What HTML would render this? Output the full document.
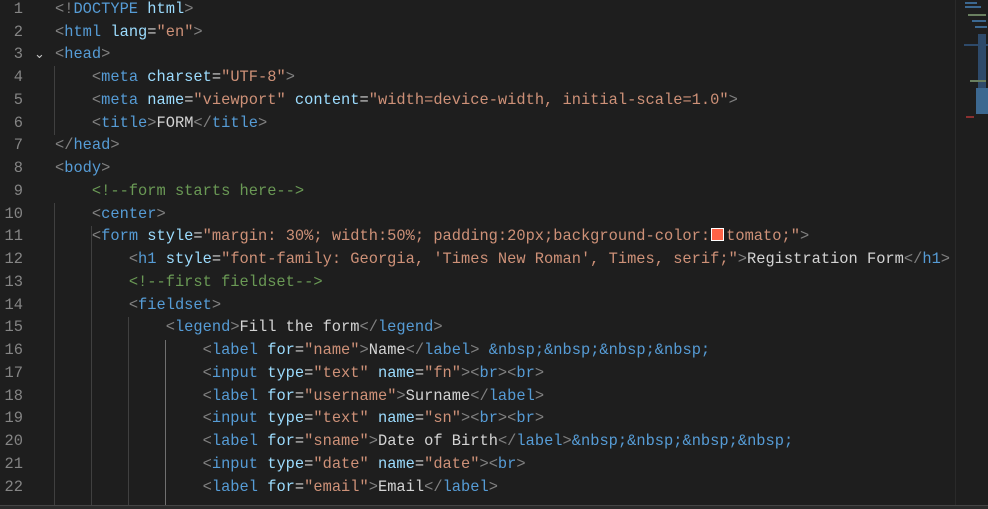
<!DOCTYPE html>
<html><head><meta charset="utf-8"><style>
body{margin:0;width:988px;height:508px;background:#1e1e1e;overflow:hidden;position:relative;font-family:"Liberation Mono",monospace;font-size:15.38px;}
.l{position:absolute;left:55px;height:23px;line-height:23px;white-space:pre;color:#d4d4d4}
.n{position:absolute;left:0;width:23px;text-align:right;height:23px;line-height:23px;color:#858585}
.b{color:#808080}.t{color:#569cd6}.a{color:#9cdcfe}.s{color:#ce9178}.c{color:#6a9955}
.g{position:absolute;width:1px;background:#404040}
.mm{position:absolute;height:2px}
</style></head><body>
<div class="g" style="left:54px;top:203px;height:302px"></div>
<div class="g" style="left:91px;top:226px;height:279px"></div>
<div class="g" style="left:128px;top:317px;height:188px"></div>
<div class="g" style="left:165px;top:340px;height:165px;background:#707070"></div>
<div class="g" style="left:54px;top:66px;height:69px"></div>
<div style="position:absolute;left:955px;top:0;width:33px;height:505px;background:#1e1e1e;border-left:1px solid #2a2a2a"></div>
<div class="mm" style="left:965px;top:2px;width:12px;background:#3c6890"></div>
<div class="mm" style="left:965px;top:6px;width:16px;background:#3c6890"></div>
<div class="mm" style="left:968px;top:14px;width:18px;background:#6a8060"></div>
<div class="mm" style="left:972px;top:20px;width:14px;background:#3c6890"></div>
<div class="mm" style="left:975px;top:26px;width:12px;background:#3c6890"></div>
<div class="mm" style="left:964px;top:44px;width:24px;background:#2e4a6a"></div>
<div class="mm" style="left:978px;top:34px;width:8px;height:60px;background:#2e4a6a"></div>
<div class="mm" style="left:970px;top:80px;width:16px;background:#6a8060"></div>
<div class="mm" style="left:976px;top:88px;width:12px;height:26px;background:#3c6890"></div>
<div class="mm" style="left:966px;top:116px;width:8px;background:#8a3030"></div>
<div style="position:absolute;left:0;top:505px;width:988px;height:3px;background:#2b2b2b;border-top:1px solid #454545"></div>

<div class="n" style="top:-2px">1</div><div class="l" style="top:-2px"><span class="b">&lt;!</span><span class="t">DOCTYPE</span> <span class="a">html</span><span class="b">&gt;</span></div>
<div class="n" style="top:21px">2</div><div class="l" style="top:21px"><span class="b">&lt;</span><span class="t">html</span> <span class="a">lang</span>=<span class="s">"en"</span><span class="b">&gt;</span></div>
<div class="n" style="top:43px">3</div><div style="position:absolute;left:34px;top:43px;line-height:23px;color:#c5c5c5;font-size:13px">&#8964;</div><div class="l" style="top:43px"><span class="b">&lt;</span><span class="t">head</span><span class="b">&gt;</span></div>
<div class="n" style="top:66px">4</div><div class="l" style="top:66px">    <span class="b">&lt;</span><span class="t">meta</span> <span class="a">charset</span>=<span class="s">"UTF-8"</span><span class="b">&gt;</span></div>
<div class="n" style="top:89px">5</div><div class="l" style="top:89px">    <span class="b">&lt;</span><span class="t">meta</span> <span class="a">name</span>=<span class="s">"viewport"</span> <span class="a">content</span>=<span class="s">"width=device-width, initial-scale=1.0"</span><span class="b">&gt;</span></div>
<div class="n" style="top:112px">6</div><div class="l" style="top:112px">    <span class="b">&lt;</span><span class="t">title</span><span class="b">&gt;</span>FORM<span class="b">&lt;/</span><span class="t">title</span><span class="b">&gt;</span></div>
<div class="n" style="top:134px">7</div><div class="l" style="top:134px"><span class="b">&lt;/</span><span class="t">head</span><span class="b">&gt;</span></div>
<div class="n" style="top:157px">8</div><div class="l" style="top:157px"><span class="b">&lt;</span><span class="t">body</span><span class="b">&gt;</span></div>
<div class="n" style="top:180px">9</div><div class="l" style="top:180px">    <span class="c">&lt;!--form starts here--&gt;</span></div>
<div class="n" style="top:203px">10</div><div class="l" style="top:203px">    <span class="b">&lt;</span><span class="t">center</span><span class="b">&gt;</span></div>
<div class="n" style="top:225px">11</div><div class="l" style="top:225px">    <span class="b">&lt;</span><span class="t">form</span> <span class="a">style</span>=<span class="s">"margin: 30%; width:50%; padding:20px;background-color:<span style="display:inline-block;width:11px;height:11px;background:#ff6347;border:1px solid #fff;vertical-align:-1px;margin:0 2px 0 1px"></span>tomato;"</span><span class="b">&gt;</span></div>
<div class="n" style="top:248px">12</div><div class="l" style="top:248px">        <span class="b">&lt;</span><span class="t">h1</span> <span class="a">style</span>=<span class="s">"font-family: Georgia, 'Times New Roman', Times, serif;"</span><span class="b">&gt;</span>Registration Form<span class="b">&lt;/</span><span class="t">h1</span><span class="b">&gt;</span></div>
<div class="n" style="top:271px">13</div><div class="l" style="top:271px">        <span class="c">&lt;!--first fieldset--&gt;</span></div>
<div class="n" style="top:294px">14</div><div class="l" style="top:294px">        <span class="b">&lt;</span><span class="t">fieldset</span><span class="b">&gt;</span></div>
<div class="n" style="top:316px">15</div><div class="l" style="top:316px">            <span class="b">&lt;</span><span class="t">legend</span><span class="b">&gt;</span>Fill the form<span class="b">&lt;/</span><span class="t">legend</span><span class="b">&gt;</span></div>
<div class="n" style="top:339px">16</div><div class="l" style="top:339px">                <span class="b">&lt;</span><span class="t">label</span> <span class="a">for</span>=<span class="s">"name"</span><span class="b">&gt;</span>Name<span class="b">&lt;/</span><span class="t">label</span><span class="b">&gt;</span> <span class="t">&amp;nbsp;&amp;nbsp;&amp;nbsp;&amp;nbsp;</span></div>
<div class="n" style="top:362px">17</div><div class="l" style="top:362px">                <span class="b">&lt;</span><span class="t">input</span> <span class="a">type</span>=<span class="s">"text"</span> <span class="a">name</span>=<span class="s">"fn"</span><span class="b">&gt;&lt;</span><span class="t">br</span><span class="b">&gt;&lt;</span><span class="t">br</span><span class="b">&gt;</span></div>
<div class="n" style="top:385px">18</div><div class="l" style="top:385px">                <span class="b">&lt;</span><span class="t">label</span> <span class="a">for</span>=<span class="s">"username"</span><span class="b">&gt;</span>Surname<span class="b">&lt;/</span><span class="t">label</span><span class="b">&gt;</span></div>
<div class="n" style="top:407px">19</div><div class="l" style="top:407px">                <span class="b">&lt;</span><span class="t">input</span> <span class="a">type</span>=<span class="s">"text"</span> <span class="a">name</span>=<span class="s">"sn"</span><span class="b">&gt;&lt;</span><span class="t">br</span><span class="b">&gt;&lt;</span><span class="t">br</span><span class="b">&gt;</span></div>
<div class="n" style="top:430px">20</div><div class="l" style="top:430px">                <span class="b">&lt;</span><span class="t">label</span> <span class="a">for</span>=<span class="s">"sname"</span><span class="b">&gt;</span>Date of Birth<span class="b">&lt;/</span><span class="t">label</span><span class="b">&gt;</span><span class="t">&amp;nbsp;&amp;nbsp;&amp;nbsp;&amp;nbsp;</span></div>
<div class="n" style="top:453px">21</div><div class="l" style="top:453px">                <span class="b">&lt;</span><span class="t">input</span> <span class="a">type</span>=<span class="s">"date"</span> <span class="a">name</span>=<span class="s">"date"</span><span class="b">&gt;&lt;</span><span class="t">br</span><span class="b">&gt;</span></div>
<div class="n" style="top:476px">22</div><div class="l" style="top:476px">                <span class="b">&lt;</span><span class="t">label</span> <span class="a">for</span>=<span class="s">"email"</span><span class="b">&gt;</span>Email<span class="b">&lt;/</span><span class="t">label</span><span class="b">&gt;</span></div>
<div style="position:absolute;left:0;top:505px;width:988px;height:3px;background:#2b2b2b;border-top:1px solid #454545"></div>
</body></html>
